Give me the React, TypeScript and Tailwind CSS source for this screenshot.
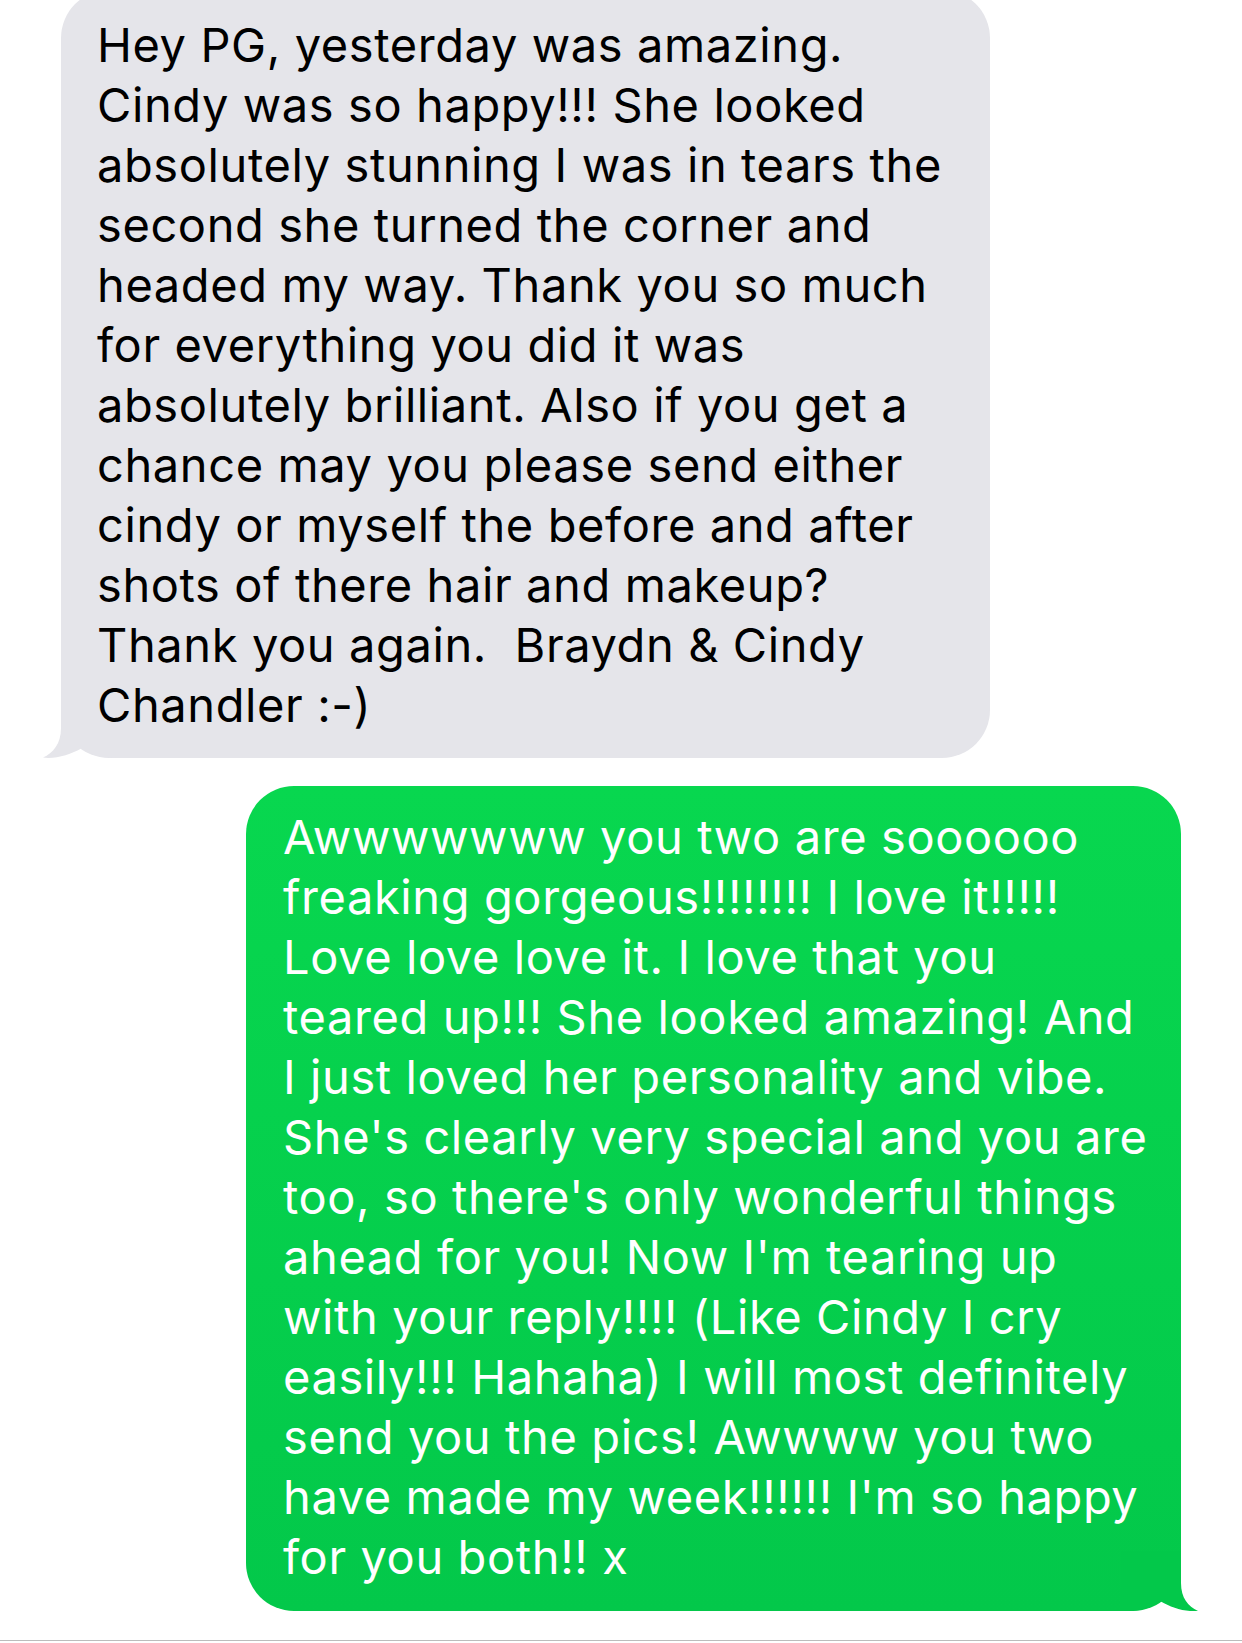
import React from "react";

const grayLines = [
  "Hey PG, yesterday was amazing.",
  "Cindy was so happy!!! She looked",
  "absolutely stunning I was in tears the",
  "second she turned the corner and",
  "headed my way. Thank you so much",
  "for everything you did it was",
  "absolutely brilliant. Also if you get a",
  "chance may you please send either",
  "cindy or myself the before and after",
  "shots of there hair and makeup?",
  "Thank you again.  Braydn & Cindy",
  "Chandler :-)",
];

const greenLines = [
  "Awwwwwww you two are soooooo",
  "freaking gorgeous!!!!!!!! I love it!!!!!",
  "Love love love it. I love that you",
  "teared up!!! She looked amazing! And",
  "I just loved her personality and vibe.",
  "She's clearly very special and you are",
  "too, so there's only wonderful things",
  "ahead for you! Now I'm tearing up",
  "with your reply!!!! (Like Cindy I cry",
  "easily!!! Hahaha) I will most definitely",
  "send you the pics! Awwww you two",
  "have made my week!!!!!! I'm so happy",
  "for you both!! x",
];

export default function App() {
  return (
    <div
      className="w-[1242px] h-[1643px] bg-white overflow-hidden flex flex-col"
      style={{ fontFamily: "Inter, 'Liberation Sans', sans-serif" }}
    >
      {/* incoming gray bubble */}
      <div className="relative mt-[-10px] ml-[61px] w-[929px] rounded-[48px] bg-[#e5e5ea] pt-[25px] pb-[23px] pl-[36px] text-[47px] leading-[60px] text-black tracking-[0.6px]">
        <svg
          className="absolute left-[-20px] bottom-0"
          width="80"
          height="60"
          viewBox="0 0 80 60"
        >
          <path
            d="M20,0 L20,30 C20,46 12,55 2,59.6 C15,61 29,57 41,50 C49,56 59,60 77,60 L80,60 L80,0 Z"
            fill="#e5e5ea"
          />
        </svg>
        {grayLines.map((l, i) => (
          <div key={i} className="relative whitespace-pre">
            {l}
          </div>
        ))}
      </div>

      {/* outgoing green bubble */}
      <div className="relative mt-[28px] ml-[246px] w-[935px] rounded-[48px] bg-gradient-to-b from-[#08d74f] to-[#03c84a] pt-[21px] pb-[24px] pl-[37px] text-[47px] leading-[60px] text-white tracking-[0.6px]">
        <svg
          className="absolute right-[-20px] bottom-0"
          width="80"
          height="60"
          viewBox="0 0 80 60"
        >
          <path
            d="M60,0 L60,32 C60,47 67,55 77,60 C64,61 51,57 39,50 C31,56 21,60 3,60 L0,60 L0,0 Z"
            fill="#03c84a"
          />
        </svg>
        {greenLines.map((l, i) => (
          <div key={i} className="relative whitespace-pre">
            {l}
          </div>
        ))}
      </div>

      <div className="mt-[29px] h-px w-full bg-[#bcbcbc]" />
    </div>
  );
}
